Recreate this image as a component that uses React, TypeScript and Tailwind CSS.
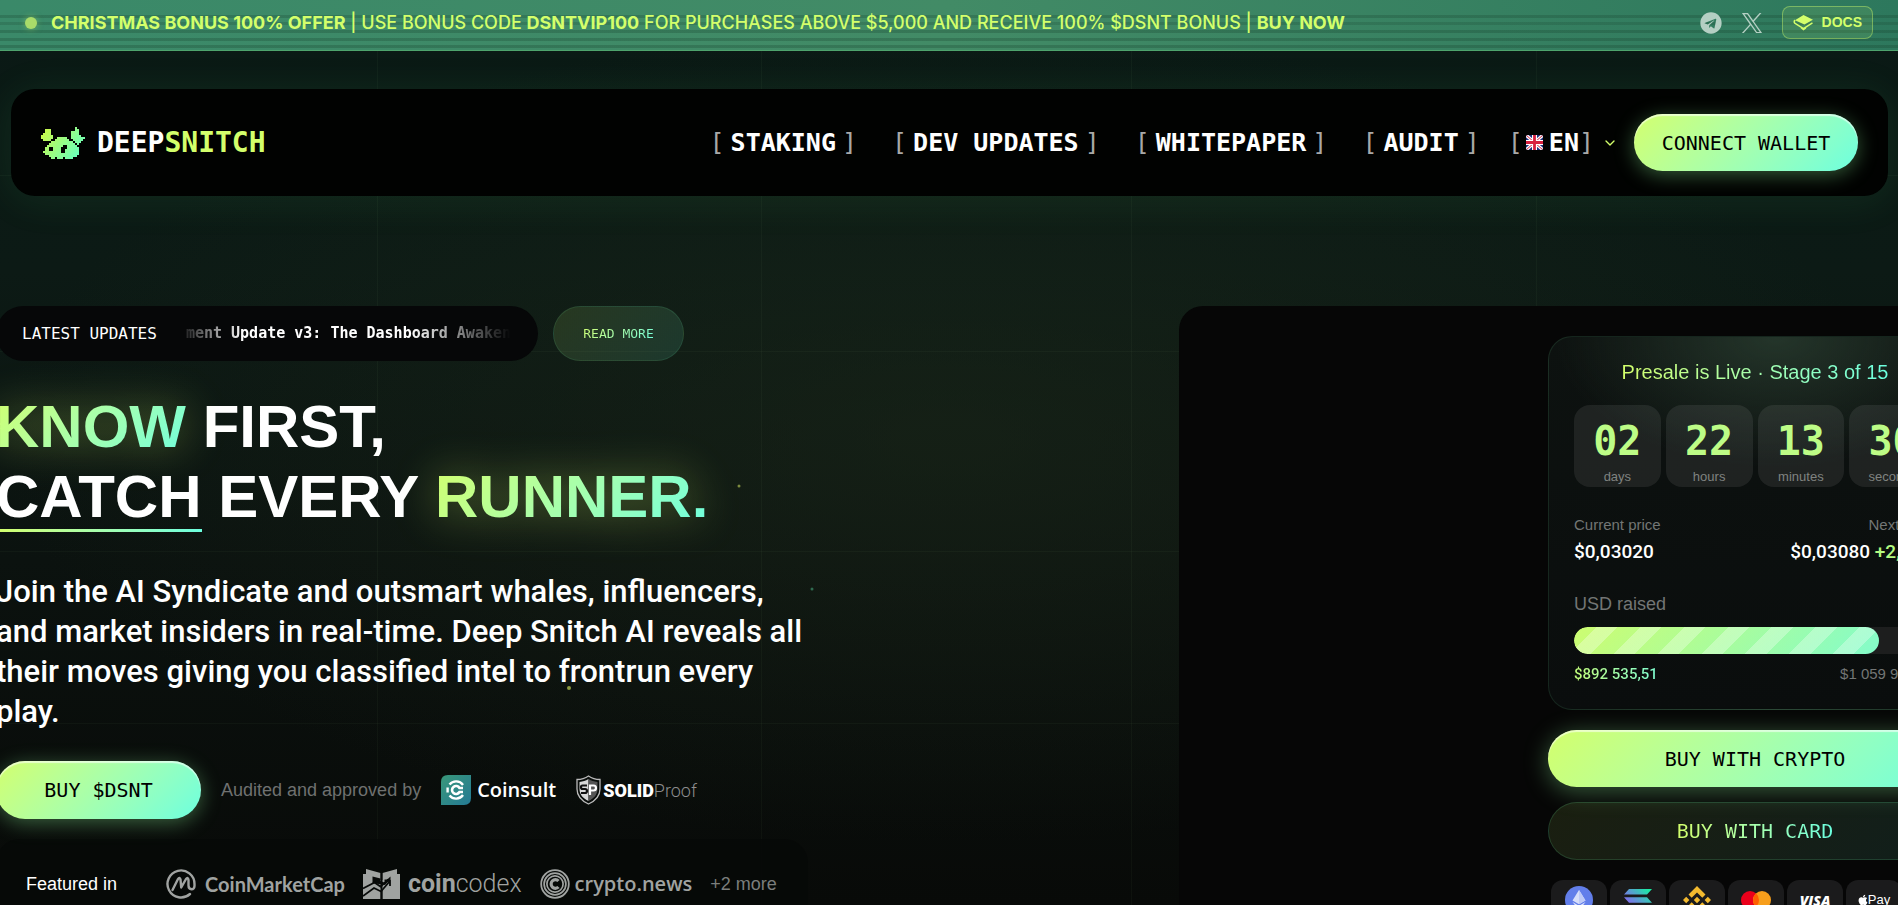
import React from 'react';
import { ChevronDown } from 'lucide-react';
import { FaApple, FaTelegram } from 'react-icons/fa';

const pixel = "font-['DejaVu_Sans_Mono','Liberation_Mono',monospace]";

const navLinks = ['STAKING', 'DEV UPDATES', 'WHITEPAPER', 'AUDIT'];

const countdown = [
  { value: '02', label: 'days' },
  { value: '22', label: 'hours' },
  { value: '13', label: 'minutes' },
  { value: '30', label: 'seconds' },
];

const mascot = [
  '.................#....',
  '..###............##...',
  '..###..........####...',
  '.####..........####...',
  '######.........#####..',
  '######..#####..#######',
  '.####..#######..#####.',
  '.....###########.###..',
  '....#############.#...',
  '...########..#####....',
  '..##..####...######...',
  '..##..####..#######...',
  '.#########..#######...',
  '..#################...',
  '....##############....',
  '.....##.###.####......',
];

const PixelMascot: React.FC = () => (
  <svg viewBox="0 0 22 16" className="w-11 h-8" shapeRendering="crispEdges" aria-hidden="true">
    <defs>
      <linearGradient id="mascot" gradientUnits="userSpaceOnUse" x1="2" y1="2" x2="18" y2="14">
        <stop offset="0" stopColor="#c6f94f" />
        <stop offset="1" stopColor="#6dffb8" />
      </linearGradient>
    </defs>
    {mascot.map((row, y) =>
      row.split('').map((cell, x) =>
        cell === '#' ? <rect key={`${x}-${y}`} x={x} y={y} width="1" height="1" fill="url(#mascot)" /> : null
      )
    )}
  </svg>
);

const XLogo: React.FC = () => (
  <svg viewBox="0 0 24 24" className="w-[22px] h-[22px]" fill="currentColor" aria-hidden="true">
    <path d="M14.1 10.3 22.3 1h-2l-7.1 8.1L7.6 1H1l8.600 12.300L1 23h2l7.500-8.600L16.500 23H23zM11.500 13.300l-.9-1.200L3.700 2.400h3l5.600 7.900.9 1.200 7.200 10.200h-3z" />
  </svg>
);

const DocsIcon: React.FC = () => (
  <svg viewBox="0 0 22 18" className="w-[21px] h-[17px]" fill="none" aria-hidden="true">
    <path d="M11 1 21 6 12 11 2 6.500Z" fill="#d3ff6b" />
    <path d="M2 6.500C.6 8 1 9.500 2.500 10.200L11 15.500l9.500-6M8.500 14.500l2.500 2 2.500-1.700" stroke="#d3ff6b" strokeWidth="1.600" />
  </svg>
);

const UkFlag: React.FC = () => (
  <svg viewBox="0 0 17 15" className="w-[17px] h-[15px] rounded-xs" aria-hidden="true">
    <rect width="17" height="15" fill="#1b2f7d" />
    <path d="M0 0l17 15M17 0L0 15" stroke="#fff" strokeWidth="3.200" />
    <path d="M0 0l17 15M17 0L0 15" stroke="#d8203f" strokeWidth="1" />
    <path d="M8.500 0v15M0 7.500h17" stroke="#fff" strokeWidth="5" />
    <path d="M8.500 0v15M0 7.500h17" stroke="#d8203f" strokeWidth="2.800" />
  </svg>
);

const TopBar: React.FC = () => (
  <div className="relative bg-linear-to-r from-[#3a8969] via-[#428b66] to-[#2d785d] border-b border-[#4ea36d]">
    {/* Scan lines */}
    <div className="absolute inset-0 bg-[linear-gradient(to_bottom,transparent_15px,rgba(20,60,40,.24)_15px,rgba(20,60,40,.24)_18px,transparent_18px,transparent_22px,rgba(20,60,40,.2)_22px,rgba(20,60,40,.2)_25px,transparent_25px,transparent_30px,rgba(20,60,40,.26)_30px,rgba(20,60,40,.26)_33px,transparent_33px,transparent_38px,rgba(20,60,40,.26)_38px,rgba(20,60,40,.26)_41px,transparent_41px,transparent_45px,rgba(20,60,40,.26)_45px,rgba(20,60,40,.26)_48px,transparent_48px)]" />
    <div className="relative flex items-center justify-between px-[25px] pt-[6px] pb-[11px]">
      <div className="flex items-center gap-[14px]">
        <span className="w-3 h-3 rounded-full bg-[#a9dc6a] shadow-[0_0_6px_#a9dc6a80]" />
        <p className="font-['Inter',sans-serif] text-[18px] leading-6 font-medium text-[#d3ff6b]">
          <b>CHRISTMAS BONUS 100% OFFER</b> | USE BONUS CODE <b>DSNTVIP100</b> FOR PURCHASES ABOVE
          $5,000 AND RECEIVE 100% $DSNT BONUS |{' '}
          <a href="#buy" className="font-bold">BUY NOW</a>
        </p>
      </div>
      <div className="flex items-center gap-[19px] text-[#b4cfc3]">
        <a href="#telegram" aria-label="Telegram">
          <FaTelegram className="w-[22px] h-[22px]" />
        </a>
        <a href="#x" aria-label="X">
          <XLogo />
        </a>
        <a
          href="#docs"
          className="flex items-center gap-2 h-[33px] px-[10px] rounded-lg border border-[#d3ff6b]/40 bg-[#d3ff6b]/10 text-[#d3ff6b] text-[14px] font-bold"
        >
          <DocsIcon />
          DOCS
        </a>
      </div>
    </div>
  </div>
);

const Navbar: React.FC = () => (
  <nav className="flex items-center justify-between ml-[11px] mr-[10px] mt-[38px] h-[107px] px-[30px] rounded-3xl bg-[#010201] shadow-[0_4px_40px_rgba(80,220,110,0.1)]">
    <a href="#home" className={`flex items-center gap-3 text-[28px] font-bold ${pixel}`}>
      <PixelMascot />
      <span>
        DEEP<span className="text-[#d3ff6b]">SNITCH</span>
      </span>
    </a>
    <div className={`flex items-center text-[25px] font-bold ${pixel}`}>
      <div className="flex items-center gap-[35px]">
        {navLinks.map(link => (
          <a key={link} href="#nav" className="flex gap-[6px] whitespace-pre">
            <span className="text-[#a8a8a8] font-normal">[</span>
            {link}
            <span className="text-[#a8a8a8] font-normal">]</span>
          </a>
        ))}
      </div>
      <button className="flex items-center ml-7" aria-label="Language">
        <span className="text-[#a8a8a8] font-normal">[</span>
        <span className="ml-[3px] mr-[6px]">
          <UkFlag />
        </span>
        EN
        <span className="text-[#a8a8a8] font-normal">]</span>
        <ChevronDown className="ml-2 w-4 h-4 text-[#d3ff6b]" />
      </button>
      <button className="ml-4 h-[57px] w-[224px] rounded-full bg-linear-135 from-[#d3ff6b] to-[#6bffdf] text-black text-[20px] font-normal shadow-[inset_0_2px_1px_rgba(255,255,255,0.6),0_4px_20px_rgba(150,255,160,0.35)]">
        CONNECT WALLET
      </button>
    </div>
  </nav>
);

const Coinsult: React.FC = () => (
  <div className="flex items-center gap-[6px] font-['Open_Sans',sans-serif] text-[20px] font-semibold">
    <svg viewBox="0 0 30 30" className="w-[30px] h-[30px]" fill="none" aria-hidden="true">
      <defs>
        <linearGradient id="coinsult" x1="0" y1="0" x2="1" y2="1">
          <stop offset="0" stopColor="#399879" />
          <stop offset="1" stopColor="#247a95" />
        </linearGradient>
      </defs>
      <path d="M7 0H30V23Q30 30 23 30H0V7Q0 0 7 0Z" fill="url(#coinsult)" />
      <path d="M8.500 9.500A8.500 8.500 0 0 1 22 10M22 20A8.500 8.500 0 0 1 8.500 20.500M6.600 12.500V17.500" stroke="#fff" strokeWidth="2.400" />
      <path d="M22 13H18.500A4 4 0 1 0 18.500 17H22" stroke="#fff" strokeWidth="2.600" />
    </svg>
    Coinsult
  </div>
);

const SolidProof: React.FC = () => (
  <div className="flex items-center gap-[2px] font-['Roboto',sans-serif] text-[18px]">
    <svg viewBox="0 0 25 30" className="w-[25px] h-[30px]" fill="none" aria-hidden="true">
      <path d="M12.500 1C9 3.500 5 4.500 1 4.500V14C1 21 6 26 12.500 29 19 26 24 21 24 14V4.500C20 4.500 16 3.500 12.500 1Z" stroke="#bbb" strokeWidth="1.300" />
      <path d="M12.500 4C9.500 6 7 6.500 3.500 7V14C3.500 19.500 7 23.500 12.500 26Z" fill="#d8d8d8" />
      <path d="M12.500 4C15.500 6 18 6.500 21.500 7V14C21.500 19.500 18 23.500 12.500 26Z" fill="#555" />
      <path d="M11 10.500H6.500Q5 10.500 5 12.200T6.500 14H9Q11 14 11 16T9 18H5" stroke="#111" strokeWidth="2.200" />
      <path d="M14 20V10.500H17.500Q20 10.500 20 13T17.500 15.500H14" stroke="#fff" strokeWidth="2.200" />
    </svg>
    <span>
      <b className="font-black">SOLID</b>
      <span className="font-light text-[#8d8d8d]">Proof</span>
    </span>
  </div>
);

const CoinMarketCap: React.FC = () => (
  <div className="flex items-center gap-[9px] font-['Lato',sans-serif] text-[20px] font-bold">
    <svg viewBox="0 0 30 30" className="w-[30px] h-[30px]" fill="none" stroke="currentColor" strokeLinecap="round" strokeLinejoin="round" aria-hidden="true">
      <path d="M24 25A13.500 13.500 0 1 1 28.500 15V17Q28.300 20.300 25.500 20.300 22.500 20 22.500 16.500V11Q22 7.500 20 10L15.200 18.500 14.500 10.500Q13.500 7.500 12 10L6.500 21" strokeWidth="2.400" />
    </svg>
    CoinMarketCap
  </div>
);

const CoinCodex: React.FC = () => (
  <div className="flex items-center gap-2 font-['Roboto',sans-serif] text-[25px]">
    <svg viewBox="0 0 37 30" className="w-[37px] h-[30px]" aria-hidden="true">
      <path d="M0 5H3V0L17.500 4V30H0Z" fill="currentColor" />
      <path d="M19.500 4L34 0V5H37V30H19.500Z" fill="currentColor" />
      <path d="M9.500 7.500 17.500 9.500V12L21 13.500 27.500 7.500V10L22 16 9.500 14Z" fill="#080a09" />
      <path d="M0 19.500 11.500 13.500 17.500 17.500 25.500 10.500" fill="none" stroke="#080a09" strokeWidth="1.800" />
      <path d="M0 27 11 19 18 22.500 26.500 12.500M21.500 11.500H27V17" fill="none" stroke="#080a09" strokeWidth="1.800" />
      <path d="M18.500 3V11M18.500 21V30" stroke="#080a09" strokeWidth="1.800" />
    </svg>
    <span>
      <b>coin</b>
      <span className="font-light">codex</span>
    </span>
  </div>
);

const CryptoNews: React.FC = () => (
  <div className="flex items-center gap-[5px] font-['Open_Sans',sans-serif] text-[20px] font-semibold">
    <svg viewBox="0 0 30 30" className="w-[30px] h-[30px]" fill="none" stroke="currentColor" aria-hidden="true">
      <circle cx="15" cy="15" r="13.800" strokeWidth="1.800" />
      <circle cx="15" cy="15" r="10.900" strokeWidth="1.700" />
      <circle cx="15" cy="15" r="8.100" strokeWidth="1.700" />
      <path d="M18.500 12A4.300 4.300 0 1 0 18.500 18" strokeWidth="3.200" />
    </svg>
    crypto.news
  </div>
);

const HeroCopy: React.FC = () => (
  <div className="w-[812px] shrink-0">
    <div className={`flex items-center gap-[15px] ${pixel}`}>
      <div className="flex items-center gap-5 w-[542px] h-[55px] pl-[26px] pr-[27px] rounded-full bg-[#060708]">
        <span className="text-[16px] whitespace-nowrap">LATEST UPDATES</span>
        <p className="flex-1 flex justify-end overflow-hidden whitespace-nowrap text-[15px] font-bold mask-[linear-gradient(to_right,transparent,#000_20%,#000_70%,transparent)]">
          ment Update v3: The Dashboard Awaken
        </p>
      </div>
      <a
        href="#updates"
        className="flex items-center justify-center w-[131px] h-[55px] rounded-full border border-[#6bffb0]/10 bg-linear-135 from-[#d3ff6b]/12 to-[#6bffdf]/12 text-[13px]"
      >
        <span className="bg-linear-135 from-[#d3ff6b] to-[#6bffdf] bg-clip-text text-transparent">READ MORE</span>
      </a>
    </div>

    <h1 className="mt-[31px] text-[60px] leading-[70px] font-bold whitespace-nowrap">
      <span className="inline-block bg-linear-135 from-[#d3ff6b] to-[#6bffdf] bg-clip-text text-transparent drop-shadow-[0_0_22px_rgba(211,255,107,0.45)]">KNOW</span>{' '}
      FIRST,
      <br />
      <span className="relative inline-block">
        CATCH
        <span className="absolute left-0 bottom-0 w-full h-[3px] bg-linear-to-r from-[#d3ff6b] to-[#6bffdf]" />
      </span>{' '}
      EVERY{' '}
      <span className="inline-block bg-linear-135 from-[#d3ff6b] to-[#6bffdf] bg-clip-text text-transparent drop-shadow-[0_0_22px_rgba(211,255,107,0.45)]">RUNNER.</span>
    </h1>

    <p className="mt-10 font-['Roboto',sans-serif] text-[31px] leading-10 font-medium">
      Join the AI Syndicate and outsmart whales, influencers, and market insiders in real-time.
      Deep Snitch AI reveals all their moves giving you classified intel to frontrun every play.
    </p>

    <div className="flex items-center gap-5 mt-[29px]">
      <button className={`w-[205px] h-[58px] rounded-full bg-linear-135 from-[#d3ff6b] to-[#6bffdf] text-black text-[20px] shadow-[inset_0_2px_1px_rgba(255,255,255,0.6),0_4px_20px_rgba(150,255,160,0.35)] ${pixel}`}>
        BUY $DSNT
      </button>
      <span className="text-[18px] text-[#6f7170]">Audited and approved by</span>
      <Coinsult />
      <SolidProof />
    </div>

    <div className="flex items-center mt-5 h-[90px] pl-[30px] rounded-3xl bg-[#070908]/90 text-[18px]">
      <span className="mr-[49px]">Featured in</span>
      <div className="flex items-center gap-[18px] text-[#a0a3a1]">
        <CoinMarketCap />
        <CoinCodex />
        <CryptoNews />
        <a href="#more" className="text-[#7b7e7c]">+2 more</a>
      </div>
    </div>
  </div>
);

const PaymentIcons: React.FC = () => (
  <div className="flex gap-[3px] mt-5 pl-[3px]">
    <div className="flex items-center justify-center w-14 h-10 rounded-xl bg-[#1b1b1c]">
      <svg viewBox="0 0 28 28" className="w-7 h-7" aria-label="Ethereum">
        <circle cx="14" cy="14" r="14" fill="#627eea" />
        <path d="M14 4 7.500 14.500 14 18.300 20.500 14.500Z" fill="#fff" fillOpacity=".75" />
        <path d="M14 4V18.300L20.500 14.500Z" fill="#bfcaf7" />
        <path d="M7.500 16 14 24.500 20.500 16 14 19.800Z" fill="#dfe5fb" />
      </svg>
    </div>
    <div className="flex items-center justify-center w-14 h-10 rounded-xl bg-[#1b1b1c]">
      <svg viewBox="0 0 28 22" className="w-7 h-[22px]" aria-label="Solana">
        <defs>
          <linearGradient id="sol" gradientUnits="userSpaceOnUse" x1="26" y1="0" x2="4" y2="22">
            <stop offset="0" stopColor="#14f1a0" />
            <stop offset="1" stopColor="#9b4dff" />
          </linearGradient>
        </defs>
        <path d="M5 0H28L23 5.500H0ZM0 8.200H23L28 13.700H5ZM5 16.500H28L23 22H0Z" fill="url(#sol)" />
      </svg>
    </div>
    <div className="flex items-center justify-center w-14 h-10 rounded-xl bg-[#1b1b1c]">
      <svg viewBox="0 0 28 28" className="w-7 h-7" fill="#f3ba2f" aria-label="BNB">
        <path d="M14 0 22.500 8.500 19.300 11.700 14 6.400 8.700 11.700 5.500 8.500ZM14 28 5.500 19.500 8.700 16.300 14 21.600 19.300 16.300 22.500 19.500Z" />
        <path d="M14 10.800 17.200 14 14 17.200 10.800 14ZM3.200 10.800 6.400 14 3.200 17.200 0 14ZM24.800 10.800 28 14 24.800 17.200 21.600 14Z" />
      </svg>
    </div>
    <div className="flex items-center justify-center w-14 h-10 rounded-xl bg-[#1b1b1c]">
      <svg viewBox="0 0 30 18" className="w-[30px] h-[18px]" aria-label="Mastercard">
        <circle cx="9" cy="9" r="9" fill="#eb001b" />
        <circle cx="21" cy="9" r="9" fill="#f79e1b" />
        <path d="M15 2.300A9 9 0 0 1 15 15.700 9 9 0 0 1 15 2.300Z" fill="#ff5f00" />
      </svg>
    </div>
    <div className="flex items-center justify-center w-14 h-10 rounded-xl bg-[#1b1b1c] font-['Open_Sans',sans-serif] text-[14px] font-extrabold italic">
      VISA
    </div>
    <div className="flex items-center justify-center w-14 h-10 rounded-xl bg-[#1b1b1c] text-[13px]">
      <FaApple className="w-[10px] h-3" />
      Pay
    </div>
  </div>
);

const PresaleCard: React.FC = () => (
  <div className="w-[813px] shrink-0 p-[30px] rounded-3xl bg-[#060606]">
    <div className="w-[414px] ml-auto">
      <section className="h-[374px] px-[25px] pt-[21px] rounded-3xl border border-[#7dffb0]/10 bg-[radial-gradient(ellipse_220px_130px_at_55%_0%,#24352a,transparent),linear-gradient(#0d1210,#0a0d0d)]">
        <h2 className="text-center text-[20px] leading-7">
          <span className="bg-linear-to-r from-[#d3ff6b] to-[#6bffdf] bg-clip-text text-transparent">
            Presale is Live · Stage 3 of 15
          </span>
        </h2>
        <div className="grid grid-cols-4 gap-[5px] mt-[19px]">
          {countdown.map(item => (
            <div key={item.label} className="flex flex-col items-center h-[82px] pt-[14px] rounded-2xl bg-white/8">
              <span className={`text-[40px] leading-[44px] font-bold text-[#bdfc86] ${pixel}`}>{item.value}</span>
              <span className="mt-[6px] text-[13px] leading-4 text-[#7f8280]">{item.label}</span>
            </div>
          ))}
        </div>

        <div className="flex justify-between mt-[28px] text-[15px] leading-5 text-[#737675]">
          <span>Current price</span>
          <span>Next price</span>
        </div>
        <div className="flex justify-between mt-[5px] font-['Roboto',sans-serif] text-[19px] leading-6 font-medium">
          <span>$0,03020</span>
          <span>
            $0,03080 <span className="text-[#b4fb80]">+2,00%</span>
          </span>
        </div>

        <p className="mt-[28px] text-[18px] leading-6 text-[#737675]">USD raised</p>
        <div className="mt-[11px] h-[27px] rounded-full bg-[#1d1e1e] overflow-hidden">
          <div
            className="h-full rounded-full bg-[repeating-linear-gradient(135deg,transparent_0,transparent_16px,rgba(255,255,255,.3)_16px,rgba(255,255,255,.3)_31px),linear-gradient(135deg,#cdfd70,#83fccb)]"
            style={{ width: `${(892535.51 / 1059999.99) * 100}%` }}
          />
        </div>
        <div className="flex justify-between mt-[10px] text-[15px] leading-5">
          <span className="bg-linear-to-r from-[#c2fd78] to-[#7dfcd0] bg-clip-text font-['Roboto',sans-serif] font-medium text-transparent">
            $892 535,51
          </span>
          <span className="text-[#737675]">$1 059 999,99</span>
        </div>
      </section>

      <button className={`block w-full h-[57px] mt-5 rounded-full bg-linear-135 from-[#d3ff6b] to-[#6bffdf] text-black text-[20px] shadow-[inset_0_2px_1px_rgba(255,255,255,0.6),0_4px_24px_rgba(150,255,160,0.35)] ${pixel}`}>
        BUY WITH CRYPTO
      </button>
      <button className={`block w-full h-[58px] mt-[15px] rounded-full border border-[#6bffb0]/15 bg-linear-135 from-[#d3ff6b]/10 to-[#6bffdf]/10 text-[20px] ${pixel}`}>
        <span className="bg-linear-to-r from-[#d3ff6b] to-[#6bffdf] bg-clip-text text-transparent">BUY WITH CARD</span>
      </button>
      <PaymentIcons />
    </div>
  </div>
);

const Backdrop: React.FC = () => (
  <svg className="absolute inset-0 w-full h-full" aria-hidden="true">
    <g stroke="#c8ff9c" strokeOpacity="0.035">
      <path d="M377.500 0V2000M761.500 0V2000M1131.500 0V2000M1536.500 0V2000" />
      <path d="M0 175.500H4000M0 351.500H4000M0 551.500H4000M0 723.500H4000" />
    </g>
    <circle cx="739" cy="486" r="1.500" fill="#7c8a3e" />
    <circle cx="812" cy="589" r="1.500" fill="#2f6b50" />
    <circle cx="569" cy="688" r="2" fill="#8c9a40" />
  </svg>
);

export default function App() {
  return (
    <div className="relative h-screen overflow-hidden text-white font-['Liberation_Sans',sans-serif] bg-[radial-gradient(ellipse_50%_45%_at_50%_48%,rgba(30,42,26,.5),transparent),linear-gradient(#0a1915,#0c1a15_30%,#0b120f_62%,#080a08)]">
      <Backdrop />
      <div className="relative">
        <TopBar />
        <Navbar />
        {/* Hero */}
        <main className="flex items-start justify-between mt-[110px] -ml-1 -mr-[94px]">
          <HeroCopy />
          <PresaleCard />
        </main>
      </div>
    </div>
  );
}
